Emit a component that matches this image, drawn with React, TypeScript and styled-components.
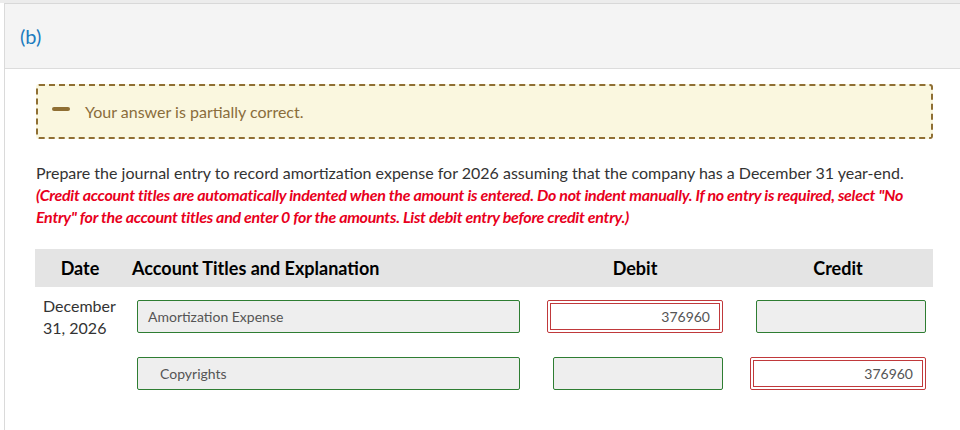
import React from "react";
import styled, { createGlobalStyle } from "styled-components";

const Global = createGlobalStyle`
  html, body { margin: 0; padding: 0; background: #ffffff; }
  body { font-family: Lato, "Open Sans", "Liberation Sans", sans-serif; }
  * { box-sizing: border-box; }
`;

const Page = styled.div`
  width: 960px;
  height: 430px;
  overflow: hidden;
  background: #ffffff;
`;

const TopShade = styled.div`
  height: 3px;
  background: #ececec;
`;

const Panel = styled.section`
  margin-left: 4px;
  border-left: 1px solid #dadada;
  border-top: 1px solid #d8d8d8;
  height: 427px;
`;

const PanelHeader = styled.header`
  height: 65px;
  background: #f4f4f4;
  border-bottom: 1px solid #dcdcdc;
  display: flex;
  align-items: center;
  padding-left: 15px;
`;

const PartLabel = styled.span`
  color: #1c7cbf;
  font-size: 20px;
  line-height: 24px;
`;

const PanelBody = styled.div`
  padding: 15px 27px 0 31px;
`;

const Notice = styled.div`
  height: 55px;
  border: 2px dashed #8f6f33;
  border-radius: 3px;
  background: #faf7df;
  display: flex;
  align-items: center;
  padding-left: 14px;
  gap: 15px;
`;

const MinusIcon = styled.span`
  display: block;
  width: 18px;
  height: 4px;
  border-radius: 2px;
  background: #8f6f33;
  margin-top: -6px;
`;

const NoticeText = styled.span`
  color: #8a6d3b;
  font-size: 16px;
  line-height: 22px;
`;

const Prompt = styled.div`
  margin-top: 23px;
  font-size: 16px;
  line-height: 22px;
  color: #333333;
`;

const PromptLine = styled.p`
  margin: 0;
`;

const Instruction = styled.p`
  margin: 0;
  color: #e8001c;
  font-weight: 700;
  font-style: italic;
  letter-spacing: -0.28px;
`;

const Table = styled.div`
  margin-top: 21px;
  margin-left: -1px;
  width: 898px;
`;

const Columns = `
  display: grid;
  grid-template-columns: 90px 415px 195px 198px;
`;

const HeaderRow = styled.div`
  ${Columns}
  height: 38px;
  background: #e4e4e4;
  align-items: center;
  margin-bottom: 8px;
`;

const HeadCell = styled.div<{ $align?: "left" | "center"; $pl?: number; $pr?: number }>`
  font-size: 18px;
  line-height: 22px;
  font-weight: 700;
  color: #000000;
  text-align: ${(p) => p.$align ?? "center"};
  padding-left: ${(p) => p.$pl ?? 0}px;
  padding-right: ${(p) => p.$pr ?? 0}px;
`;

const EntryRow = styled.div`
  ${Columns}
  height: 57px;
  align-items: start;
`;

const DateCell = styled.div`
  padding-left: 8px;
  font-size: 16px;
  line-height: 22px;
  color: #333333;
`;

const InputCell = styled.div<{ $pr?: number; $pl?: number }>`
  display: flex;
  justify-content: ${(p) => (p.$pl !== undefined ? "flex-start" : "flex-end")};
  padding-top: 5px;
  padding-left: ${(p) => p.$pl ?? 0}px;
  padding-right: ${(p) => p.$pr ?? 0}px;
`;

const Field = styled.div<{ $width: number; $indent?: boolean }>`
  width: ${(p) => p.$width}px;
  height: 33px;
  border: 1px solid #2e7d32;
  border-radius: 2px;
  background: #eeeeee;
  display: flex;
  align-items: center;
  padding-left: ${(p) => (p.$indent ? 22 : 10)}px;
  font-size: 14px;
  color: #555555;
`;

const ErrorFrame = styled.div`
  width: 176px;
  height: 33px;
  border: 1px solid #c0393b;
  border-radius: 2px;
  padding: 2px;
  background: #ffffff;
`;

const ErrorInput = styled.div`
  height: 100%;
  border: 1px solid #c0393b;
  background: #ffffff;
  display: flex;
  align-items: center;
  justify-content: flex-end;
  padding-right: 9px;
  font-size: 14px;
  color: #555555;
`;

export default function App() {
  return (
    <Page>
      <Global />
      <TopShade />
      <Panel>
        <PanelHeader>
          <PartLabel>(b)</PartLabel>
        </PanelHeader>
        <PanelBody>
          <Notice>
            <MinusIcon />
            <NoticeText>Your answer is partially correct.</NoticeText>
          </Notice>
          <Prompt>
            <PromptLine>
              Prepare the journal entry to record amortization expense for 2026 assuming that the company has a December 31 year-end.
            </PromptLine>
            <Instruction>
              (Credit account titles are automatically indented when the amount is entered. Do not indent manually. If no entry is required, select "No Entry" for the account titles and enter 0 for the amounts. List debit entry before credit entry.)
            </Instruction>
          </Prompt>
          <Table>
            <HeaderRow>
              <HeadCell>Date</HeadCell>
              <HeadCell $align="left" $pl={7}>Account Titles and Explanation</HeadCell>
              <HeadCell $pr={5}>Debit</HeadCell>
              <HeadCell $pl={8}>Credit</HeadCell>
            </HeaderRow>
            <EntryRow>
              <DateCell>
                December
                <br />
                31, 2026
              </DateCell>
              <InputCell $pl={12}>
                <Field $width={383}>Amortization Expense</Field>
              </InputCell>
              <InputCell $pr={12}>
                <ErrorFrame>
                  <ErrorInput>376960</ErrorInput>
                </ErrorFrame>
              </InputCell>
              <InputCell $pr={7}>
                <Field $width={170} />
              </InputCell>
            </EntryRow>
            <EntryRow>
              <DateCell />
              <InputCell $pl={12}>
                <Field $width={383} $indent>Copyrights</Field>
              </InputCell>
              <InputCell $pr={12}>
                <Field $width={170} />
              </InputCell>
              <InputCell $pr={7}>
                <ErrorFrame>
                  <ErrorInput>376960</ErrorInput>
                </ErrorFrame>
              </InputCell>
            </EntryRow>
          </Table>
        </PanelBody>
      </Panel>
    </Page>
  );
}
